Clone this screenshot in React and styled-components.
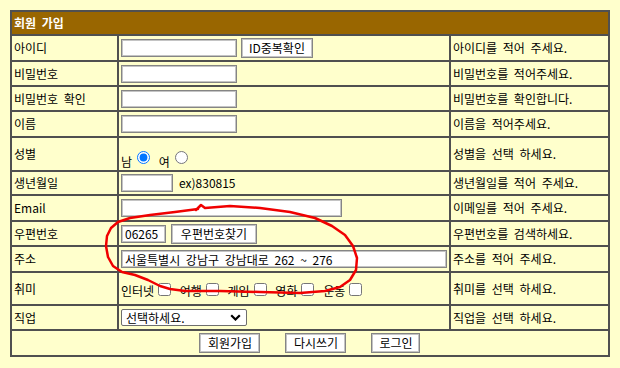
import React from "react";
import styled, { createGlobalStyle } from "styled-components";

const Global = createGlobalStyle`
  html, body { margin: 0; padding: 0; background: #ffffcc; }
  body {
    font-family: "Noto Sans CJK KR", "Noto Sans", sans-serif;
    font-size: 12px;
    color: #000;
    word-spacing: 3px;
  }
`;

const Page = styled.div`
  position: relative;
  width: 620px;
  height: 368px;
  padding-top: 10px;
  box-sizing: border-box;
`;

const Form = styled.table`
  width: 600px;
  margin: 0 auto;
  border: 1px solid #505050;
  border-collapse: separate;
  border-spacing: 0;
  table-layout: fixed;
  background: #ffffcc;
`;

const Col = styled.col`
  width: ${(p) => p.$w}px;
`;

const Cell = styled.td`
  box-sizing: border-box;
  border: 1px solid #505050;
  padding: ${(p) => p.$pad || "0 2px"};
  height: ${(p) => p.$h || 25}px;
  vertical-align: middle;
  white-space: nowrap;
  line-height: 16px;
`;

const HeadCell = styled(Cell)`
  background: #996600;
  color: #fff;
  font-weight: bold;
`;

const Field = styled.div`
  display: flex;
  align-items: center;
  gap: ${(p) => p.$gap || 4}px;
`;

const Inline = styled.div`
  line-height: 16px;
`;

const TextInput = styled.input`
  box-sizing: border-box;
  width: ${(p) => p.$w}px;
  height: 18px;
  margin: 0;
  padding: 0 3px;
  border: 1px solid #858585;
  box-shadow: inset 0 0 0 1px #c4c4c4;
  background: #fff;
  font: inherit;
  word-spacing: inherit;
  color: #000;
  outline: none;
`;

const Btn = styled.button`
  box-sizing: border-box;
  width: ${(p) => p.$w}px;
  height: 20px;
  margin: 0;
  padding: 0;
  border: 1px solid #858585;
  box-shadow: inset 0 0 0 1px #c4c4c4;
  background: #fff;
  font: inherit;
  color: #000;
  line-height: 16px;
`;

const Radio = styled.input.attrs({ type: "radio" })`
  vertical-align: 3px;
`;

const Check = styled.input.attrs({ type: "checkbox" })``;

const SelectWrap = styled.span`
  position: relative;
  display: inline-block;
  width: 126px;
  height: 17px;
`;

const Select = styled.select`
  appearance: none;
  box-sizing: border-box;
  width: 126px;
  height: 17px;
  margin: 0;
  padding: 0 0 0 4px;
  border: 1px solid #6e6e6e;
  border-radius: 2px;
  background: #fff;
  font: inherit;
  color: #000;
  line-height: 15px;
`;

const Chevron = styled.svg`
  position: absolute;
  right: 6px;
  top: 5px;
  pointer-events: none;
`;

const ButtonBar = styled.div`
  display: flex;
  justify-content: center;
  gap: 25px;
`;

const Ink = styled.svg`
  position: absolute;
  left: 0;
  top: 0;
  pointer-events: none;
`;

const rows = [
  { label: "아이디", help: "아이디를 적어 주세요.", h: 26, kind: "id" },
  { label: "비밀번호", help: "비밀번호를 적어주세요.", h: 25, kind: "pw" },
  { label: "비밀번호 확인", help: "비밀번호를 확인합니다.", h: 25, kind: "pw" },
  { label: "이름", help: "이름을 적어주세요.", h: 26, kind: "name" },
  { label: "성별", help: "성별을 선택 하세요.", h: 34, kind: "gender" },
  { label: "생년월일", help: "생년월일를 적어 주세요.", h: 24, kind: "birth" },
  { label: "Email", help: "이메일를 적어 주세요.", h: 26, kind: "email" },
  { label: "우편번호", help: "우편번호를 검색하세요.", h: 25, kind: "zip" },
  { label: "주소", help: "주소를 적어 주세요.", h: 26, kind: "addr" },
  { label: "취미", help: "취미를 선택 하세요.", h: 33, kind: "hobby" },
  { label: "직업", help: "직업을 선택 하세요.", h: 25, kind: "job" },
];

const fieldPad = { gender: "9px 2px 0", hobby: "2px 2px 0" };

function FieldFor({ kind }) {
  switch (kind) {
    case "id":
      return (
        <Field>
          <TextInput $w={116} />
          <Btn $w={72}>ID중복확인</Btn>
        </Field>
      );
    case "pw":
      return (
        <Field>
          <TextInput $w={116} type="password" />
        </Field>
      );
    case "name":
      return (
        <Field>
          <TextInput $w={116} />
        </Field>
      );
    case "gender":
      return (
        <Inline>
          남<Radio name="g" defaultChecked /> 여<Radio name="g" />
        </Inline>
      );
    case "birth":
      return (
        <Field $gap={6}>
          <TextInput $w={52} />
          <span>ex)830815</span>
        </Field>
      );
    case "email":
      return (
        <Field>
          <TextInput $w={221} />
        </Field>
      );
    case "zip":
      return (
        <Field $gap={5}>
          <TextInput $w={45} defaultValue="06265" />
          <Btn $w={86}>우편번호찾기</Btn>
        </Field>
      );
    case "addr":
      return (
        <Field>
          <TextInput $w={326} defaultValue="서울특별시 강남구 강남대로 262 ~ 276" />
        </Field>
      );
    case "hobby":
      return (
        <Inline>
          인터넷<Check /> 여행<Check /> 게임<Check /> 영화<Check /> 운동<Check />
        </Inline>
      );
    case "job":
      return (
        <Field>
          <SelectWrap>
            <Select defaultValue="">
              <option value="">선택하세요.</option>
              <option>학생</option>
              <option>회사원</option>
            </Select>
            <Chevron width="11" height="7" viewBox="0 0 11 7">
              <path d="M1.2 1.2 L5.5 5.5 L9.8 1.2" fill="none" stroke="#000" strokeWidth="2.2" />
            </Chevron>
          </SelectWrap>
        </Field>
      );
    default:
      return null;
  }
}

const inkPoints = [
  [196, 210], [201, 205], [205, 208], [230, 206], [260, 208], [290, 212], [315, 218],
  [332, 226], [345, 235], [353, 246], [357, 258], [356, 270], [350, 280], [340, 287],
  [325, 291], [300, 293], [260, 292], [220, 291], [185, 291], [170, 289], [160, 286],
  [148, 280], [135, 275], [122, 272], [113, 266], [108, 257], [106, 246], [107, 236],
  [111, 228], [118, 222], [130, 218], [150, 215], [175, 212], [198, 209],
];

export default function App() {
  return (
    <Page>
      <Global />
      <Form>
        <colgroup>
          <Col $w={107} />
          <Col $w={332} />
          <Col $w={159} />
        </colgroup>
        <tbody>
          <tr>
            <HeadCell colSpan={3} $h={24}>회원 가입</HeadCell>
          </tr>
          {rows.map((r) => (
            <tr key={r.label}>
              <Cell $h={r.h}>{r.label}</Cell>
              <Cell $h={r.h} $pad={fieldPad[r.kind]}>
                <FieldFor kind={r.kind} />
              </Cell>
              <Cell $h={r.h}>{r.help}</Cell>
            </tr>
          ))}
          <tr>
            <Cell colSpan={3} $h={26}>
              <ButtonBar>
                <Btn $w={61}>회원가입</Btn>
                <Btn $w={61}>다시쓰기</Btn>
                <Btn $w={49}>로그인</Btn>
              </ButtonBar>
            </Cell>
          </tr>
        </tbody>
      </Form>
      <Ink width="620" height="368" viewBox="0 0 620 368">
        <polyline
          points={inkPoints.map((p) => p.join(",")).join(" ")}
          fill="none"
          stroke="#f00000"
          strokeWidth="2.5"
          strokeLinejoin="round"
          strokeLinecap="round"
        />
      </Ink>
    </Page>
  );
}
